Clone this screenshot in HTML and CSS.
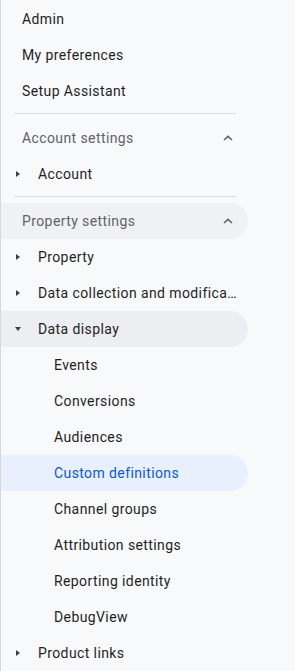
FILE: index.html
```html
<!DOCTYPE html>
<html lang="en">
<head>
    <meta charset="UTF-8">
    <meta name="viewport" content="width=device-width, initial-scale=1.0">
    <title>Admin</title>
    <link rel="stylesheet" href="styles.css">
</head>
<body>
    <nav class="sidebar">
        <ul class="menu">
            <li class="item">Admin</li>
            <li class="item">My preferences</li>
            <li class="item">Setup Assistant</li>
        </ul>
        <hr class="divider">
        <div class="section-head">
            <span>Account settings</span>
            <svg class="chevron" width="10" height="6" viewBox="0 0 10 6"><polyline points="1,5 5,1.3 9,5" fill="none" stroke="#5f6368" stroke-width="1.6"/></svg>
        </div>
        <ul class="menu">
            <li class="item parent"><span class="caret right"></span><span class="label">Account</span></li>
        </ul>
        <hr class="divider">
        <div class="section-head hover">
            <span>Property settings</span>
            <svg class="chevron" width="10" height="6" viewBox="0 0 10 6"><polyline points="1,5 5,1.3 9,5" fill="none" stroke="#5f6368" stroke-width="1.6"/></svg>
        </div>
        <ul class="menu">
            <li class="item parent"><span class="caret right"></span><span class="label">Property</span></li>
            <li class="item parent"><span class="caret right"></span><span class="label">Data collection and modification</span></li>
            <li class="item parent open"><span class="caret down"></span><span class="label">Data display</span></li>
            <li class="item child">Events</li>
            <li class="item child">Conversions</li>
            <li class="item child">Audiences</li>
            <li class="item child active">Custom definitions</li>
            <li class="item child">Channel groups</li>
            <li class="item child">Attribution settings</li>
            <li class="item child">Reporting identity</li>
            <li class="item child">DebugView</li>
            <li class="item parent"><span class="caret right"></span><span class="label">Product links</span></li>
        </ul>
    </nav>
</body>
</html>
```

FILE: styles.css
```css
body {
    margin: 0;
    padding: 0;
    background-color: #f8f9fb;
    font-family: 'Roboto', 'Liberation Sans', sans-serif;
    font-size: 14px;
    letter-spacing: 0.4px;
    color: #1f1f1f;
    overflow: hidden;
}
.sidebar {
    width: 248px;
    min-height: 671px;
    border-left: 1px solid #d6d8dc;
    padding-top: 1px;
    box-sizing: border-box;
}
.menu {
    list-style-type: none;
    margin: 0;
    padding: 0;
}
.item {
    height: 36px;
    display: flex;
    align-items: center;
    padding: 0 7px 0 21px;
    white-space: nowrap;
}
.item.parent {
    padding-left: 0;
}
.item.child {
    padding-left: 53px;
}
.item.open {
    background-color: #eceef1;
    border-radius: 0 18px 18px 0;
}
.item.active {
    background-color: #e8f0fe;
    border-radius: 0 18px 18px 0;
    color: #0b57d0;
}
.label {
    overflow: hidden;
    text-overflow: ellipsis;
}
.caret {
    width: 37px;
    flex-shrink: 0;
    display: flex;
    justify-content: center;
    box-sizing: border-box;
    padding-right: 3px;
}
.caret::before {
    content: "";
    width: 0;
    height: 0;
}
.caret.right::before {
    border-top: 3px solid transparent;
    border-bottom: 3px solid transparent;
    border-left: 4px solid #3c4043;
}
.caret.down::before {
    border-left: 3.5px solid transparent;
    border-right: 3.5px solid transparent;
    border-top: 4px solid #3c4043;
}
.divider {
    border: 0;
    border-top: 1px solid #dadce0;
    margin: 4px 12px 6px 13px;
}
.section-head {
    height: 36px;
    display: flex;
    align-items: center;
    justify-content: space-between;
    padding: 0 15px 0 21px;
    color: #5f6368;
}
.section-head.hover {
    background-color: #f0f1f4;
    border-radius: 0 18px 18px 0;
}
```
